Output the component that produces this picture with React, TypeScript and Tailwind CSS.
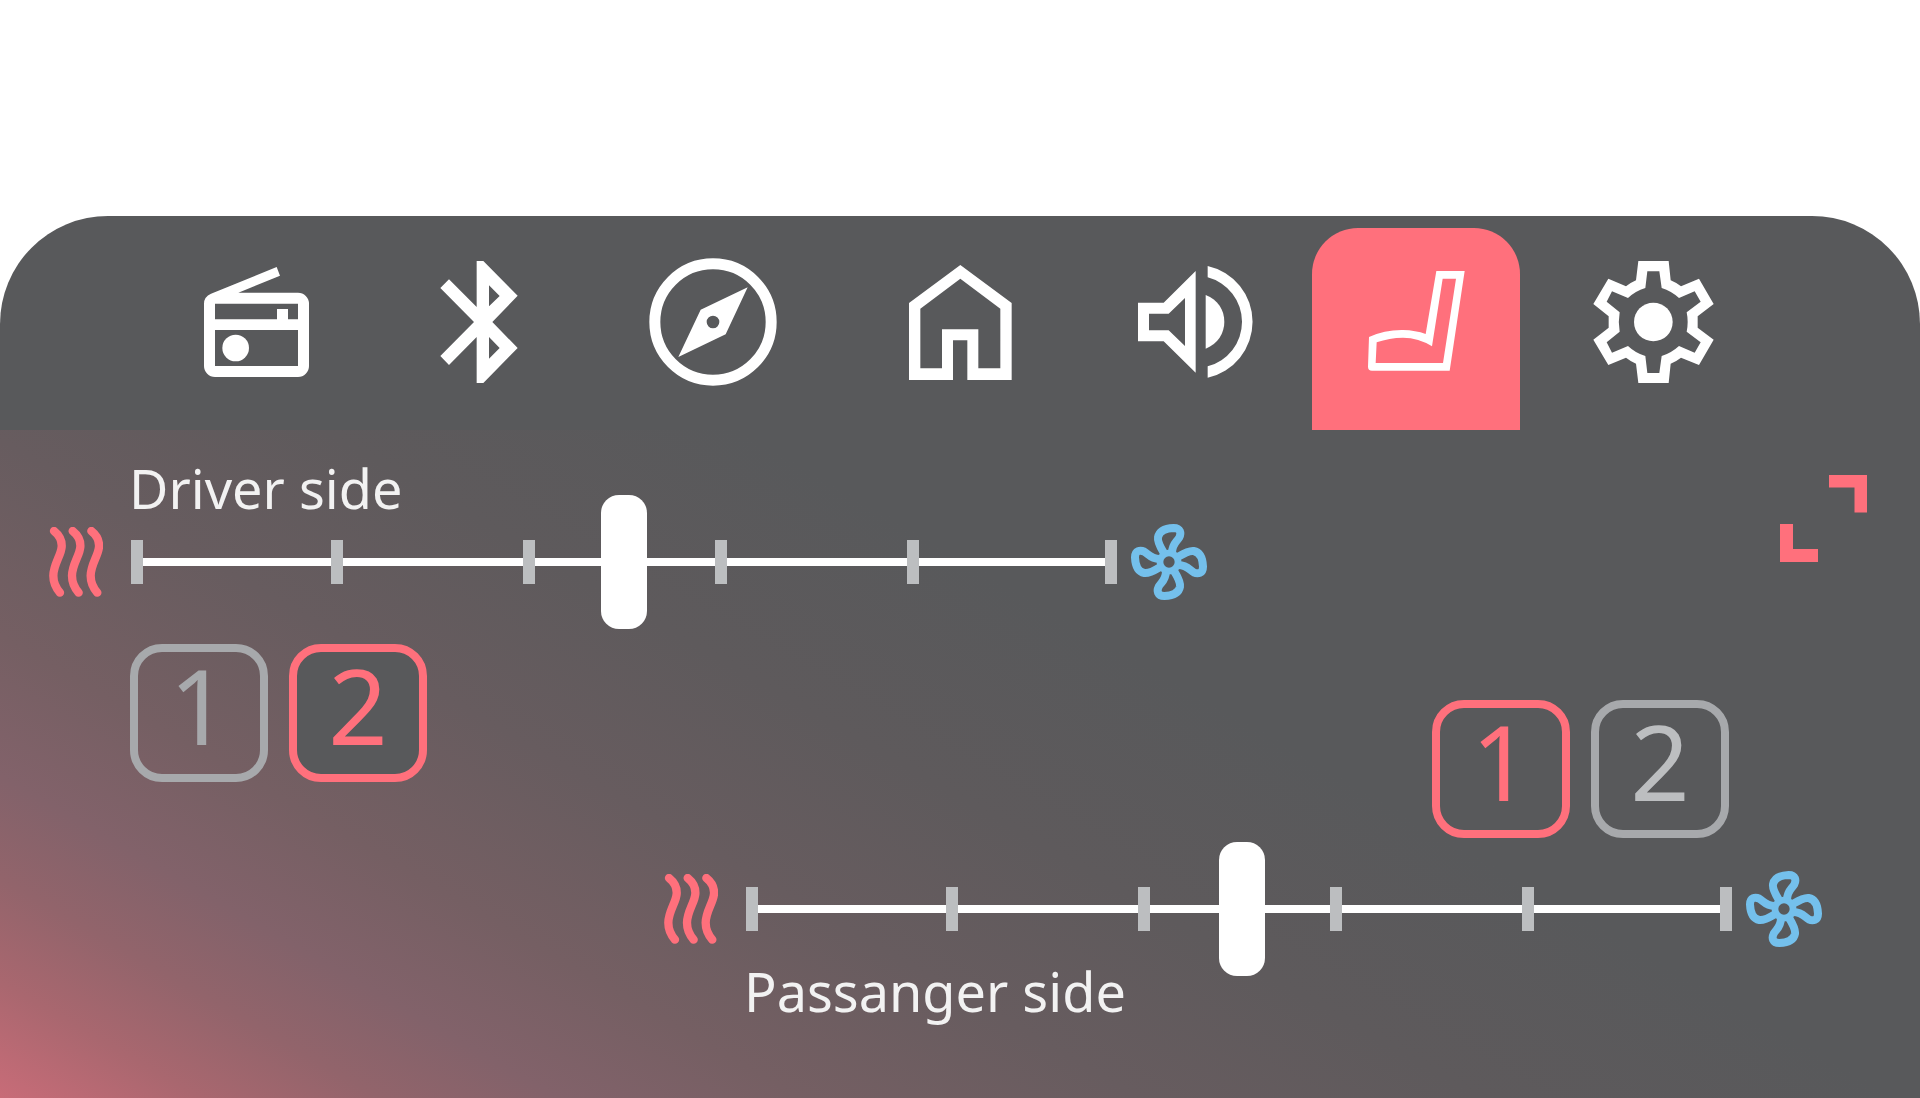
import { useState } from 'react';
import type { ReactNode } from 'react';
import clsx from 'clsx';

function RadioIcon() {
  return (
    <svg className="w-[105px] h-[110px]" viewBox="72 81 315 330" fill="currentColor" fillRule="evenodd" aria-hidden="true">
      <path d="M290 81L300 107L175 158H354A33 33 0 0 1 387 191V378A33 33 0 0 1 354 411H105A33 33 0 0 1 72 378V191Q72 170 93 161ZM105 191V238H291V207H324V238H354V191ZM105 270V378H354V270Z" />
      <circle cx="167" cy="324" r="40" />
    </svg>
  );
}

function BluetoothIcon() {
  return (
    <svg className="w-[78px] h-[122px]" viewBox="781 63 234 366" fill="currentColor" fillRule="evenodd" aria-hidden="true">
      <path d="M891 63H911L1014 167L938 246L1014 324L911 429H891V291L808 375L782 348L883 246L782 144L808 118L891 201ZM928 136V199L960 168ZM928 291V356L960 324Z" />
    </svg>
  );
}

function CompassIcon() {
  return (
    <svg className="w-32 h-32" viewBox="59 54 384 384" fill="currentColor" fillRule="evenodd" aria-hidden="true">
      <circle cx="251" cy="246" r="174.5" fill="none" stroke="currentColor" strokeWidth="33" />
      <path d="M355 142L289 283L147 351L214 209ZM251 227A19 19 0 1 0 251 265A19 19 0 1 0 251 227Z" />
    </svg>
  );
}

function HomeIcon() {
  return (
    <svg className="w-[103px] h-[115px]" viewBox="837 74 309 345" fill="currentColor" fillRule="evenodd" aria-hidden="true">
      <path d="M837 188L991 74L1145 188V419H1012V300H969V419H837ZM871 205V384H936V267H1045V384H1111V205L991 115Z" />
    </svg>
  );
}

function SpeakerIcon() {
  return (
    <svg className="w-[115px] h-[112px]" viewBox="76 142 345 336" fill="currentColor" fillRule="evenodd" aria-hidden="true">
      <path d="M76 252H153L249 157V462L153 368H76ZM109 285V335H168L217 382V238L168 285Z" />
      <path d="M279 229C316 243 335 275 335 309S316 375 279 390Z" />
      <path d="M285 142A171.5 171.5 0 0 1 285 477V443A138 138 0 0 0 285 176Z" />
    </svg>
  );
}

function SeatIcon() {
  return (
    <svg className="w-[97px] h-[100px]" viewBox="778 152 291 300" fill="currentColor" fillRule="evenodd" aria-hidden="true">
      <path d="M983 152H1068L1023 451H790Q778 451 778 439L781 350Q829 328 883 329Q921 330 951 341ZM1002 175L970 378Q930 352 883 352Q842 352 804 366L801 428H1003L1042 175Z" />
    </svg>
  );
}

function GearIcon() {
  return (
    <svg className="w-[121px] h-[122px]" viewBox="103 93 363 366" fill="currentColor" fillRule="evenodd" aria-hidden="true">
      <path d="M239 93H330L336 151Q353 158 367 169L421 146L465 222L417 259V293L465 329L421 405L367 383Q353 394 336 401L330 459H239L232 401Q216 394 202 383L149 405L104 329L150 293V259L104 222L149 146L202 169Q216 158 232 151ZM266 124L260 174Q230 183 208 204L160 184L144 215L183 247Q178 276 183 305L144 337L160 368L208 348Q230 369 260 378L266 429H302L309 378Q338 369 361 348L408 368L426 337L384 305Q390 276 384 247L426 215L408 184L361 204Q338 183 309 174L302 124Z" />
      <circle cx="284" cy="276" r="58" />
    </svg>
  );
}

function HeatIcon() {
  return (
    <svg
      className="shrink-0 w-[54px] h-[70px] mr-7 text-[#ff707c]"
      viewBox="27 46 162 210"
      fill="none"
      stroke="currentColor"
      strokeWidth={25}
      strokeLinecap="round"
      aria-hidden="true"
    >
      {[0, 56, 112].map((x) => (
        <path key={x} transform={`translate(${x} 0)`} d="M42 58C57 70 66 88 65 105C64 130 40 158 40 192C40 212 48 229 60 243" />
      ))}
    </svg>
  );
}

function FanIcon() {
  return (
    <svg
      className="shrink-0 w-[76px] h-[76px] ml-3.5 text-[#74c0ec]"
      viewBox="-114 -114 228 228"
      fill="none"
      stroke="currentColor"
      strokeWidth={24}
      strokeLinejoin="round"
      aria-hidden="true"
    >
      <circle r="27" strokeWidth={20} />
      {[0, 90, 180, 270].map((angle) => (
        <path
          key={angle}
          transform={`rotate(${angle})`}
          d="M-16 -28C-28 -48 -35 -62 -33 -74C-29 -95 -10 -101 14 -102C35 -102 37 -86 31 -74C24 -61 10 -56 9 -28"
        />
      ))}
    </svg>
  );
}

interface Tab {
  id: string;
  label: string;
  icon: ReactNode;
}

const TABS: Tab[] = [
  { id: 'radio', label: 'Radio', icon: <RadioIcon /> },
  { id: 'bluetooth', label: 'Bluetooth', icon: <BluetoothIcon /> },
  { id: 'navigation', label: 'Navigation', icon: <CompassIcon /> },
  { id: 'home', label: 'Home', icon: <HomeIcon /> },
  { id: 'sound', label: 'Sound', icon: <SpeakerIcon /> },
  { id: 'seats', label: 'Seats', icon: <SeatIcon /> },
  { id: 'settings', label: 'Settings', icon: <GearIcon /> },
];

interface TemperatureSliderProps {
  id: string;
  initial: number;
}

// Negative values heat the seat, positive values cool it
function TemperatureSlider({ id, initial }: TemperatureSliderProps) {
  const [value, setValue] = useState(initial);

  return (
    <div className="flex items-center h-[76px]">
      <HeatIcon />
      <div className="relative flex flex-1 items-center h-11">
        <span className="w-3 h-11 bg-[#bcbec0]" />
        <span className="flex-1 h-2 bg-white" />
        <span className="w-3 h-11 bg-[#bcbec0]" />
        <div className="absolute inset-0 flex justify-between pl-[200px] pr-[198px]">
          {[1, 2, 3, 4].map((tick) => (
            <span key={tick} className="w-3 h-11 bg-[#bcbec0]" />
          ))}
        </div>
        <input
          id={id}
          type="range"
          min={-150}
          max={150}
          value={value}
          onChange={(e) => setValue(Number(e.target.value))}
          className="absolute inset-0 w-full h-11 appearance-none bg-transparent cursor-pointer [&::-webkit-slider-thumb]:appearance-none [&::-webkit-slider-thumb]:w-[46px] [&::-webkit-slider-thumb]:h-[134px] [&::-webkit-slider-thumb]:rounded-[18px] [&::-webkit-slider-thumb]:bg-white"
        />
      </div>
      <FanIcon />
    </div>
  );
}

interface PresetsProps {
  side: string;
  initial: number;
  idleText: string;
}

function Presets({ side, initial, idleText }: PresetsProps) {
  const [selected, setSelected] = useState(initial);

  return (
    <div className="flex gap-[21px]">
      {[1, 2].map((preset) => (
        <button
          key={preset}
          type="button"
          aria-label={`${side} preset ${preset}`}
          aria-pressed={selected === preset}
          onClick={() => setSelected(preset)}
          className={clsx(
            'flex items-center justify-center w-[138px] h-[138px] pb-4 rounded-[32px] border-8 text-[104px] leading-none',
            selected === preset ? 'border-[#ff707c] bg-[#58595b] text-[#ff707c]' : ['border-[#a7a9ac]', idleText]
          )}
        >
          {preset}
        </button>
      ))}
    </div>
  );
}

export default function App() {
  const [activeTab, setActiveTab] = useState('seats');

  return (
    <main className="flex flex-col min-h-screen pt-54 bg-white font-['Noto_Sans',sans-serif]">
      <div className="flex flex-col flex-1 overflow-hidden rounded-t-[108px] bg-[#58595b]">
        <nav className="grid grid-cols-[234fr_211fr_258fr_236fr_234fr_208fr_267fr] h-[214px] pl-[139px] pr-[133px] text-white">
          {TABS.map((tab) => (
            <button
              key={tab.id}
              type="button"
              aria-label={tab.label}
              onClick={() => setActiveTab(tab.id)}
              className={clsx(
                'flex items-center justify-center',
                activeTab === tab.id ? 'mt-3 pb-4 rounded-t-[46px] bg-[#ff707c]' : 'pb-0.5'
              )}
            >
              {tab.icon}
            </button>
          ))}
        </nav>

        <div className="grid flex-1 grid-cols-[49fr_615fr_543fr_615fr_98fr] bg-[linear-gradient(30deg,#c86c78_0px,#a9676f_100px,#92646b_190px,#82626a_280px,#755f63_400px,#675c5f_570px,#5e5a5c_740px,#58595b_950px)]">
          <section className="col-start-2 col-end-4 row-start-1 self-start pt-[30px]">
            <label htmlFor="driver" className="block pl-20 text-[54px] leading-14 text-[#f2f2f2]">
              Driver side
            </label>
            <div className="pt-2 pb-11">
              <TemperatureSlider id="driver" initial={0} />
            </div>
            <div className="pl-[81px]">
              <Presets side="Driver" initial={2} idleText="text-[#a7a9ac]" />
            </div>
          </section>

          <button
            type="button"
            aria-label="Expand"
            className="col-start-4 col-end-6 row-start-1 self-start justify-self-end mt-[45px] mr-[53px] text-[#ff707c]"
          >
            <svg className="w-[87px] h-[87px]" viewBox="0 0 87 87" fill="currentColor" aria-hidden="true">
              <path d="M49 0H87V37.5H74.5V12.5H49ZM0 49H13V74H38V87H0Z" />
            </svg>
          </button>

          <section className="col-start-3 col-end-5 row-start-1 self-end pt-[270px] pb-[79px]">
            <div className="flex justify-end pr-[93px]">
              <Presets side="Passanger" initial={1} idleText="text-[#bcbec0]" />
            </div>
            <div className="pt-[33px] pb-4">
              <TemperatureSlider id="passanger" initial={1} />
            </div>
            <label htmlFor="passanger" className="block pl-20 text-[54px] leading-14 text-[#f2f2f2]">
              Passanger side
            </label>
          </section>
        </div>
      </div>
    </main>
  );
}
